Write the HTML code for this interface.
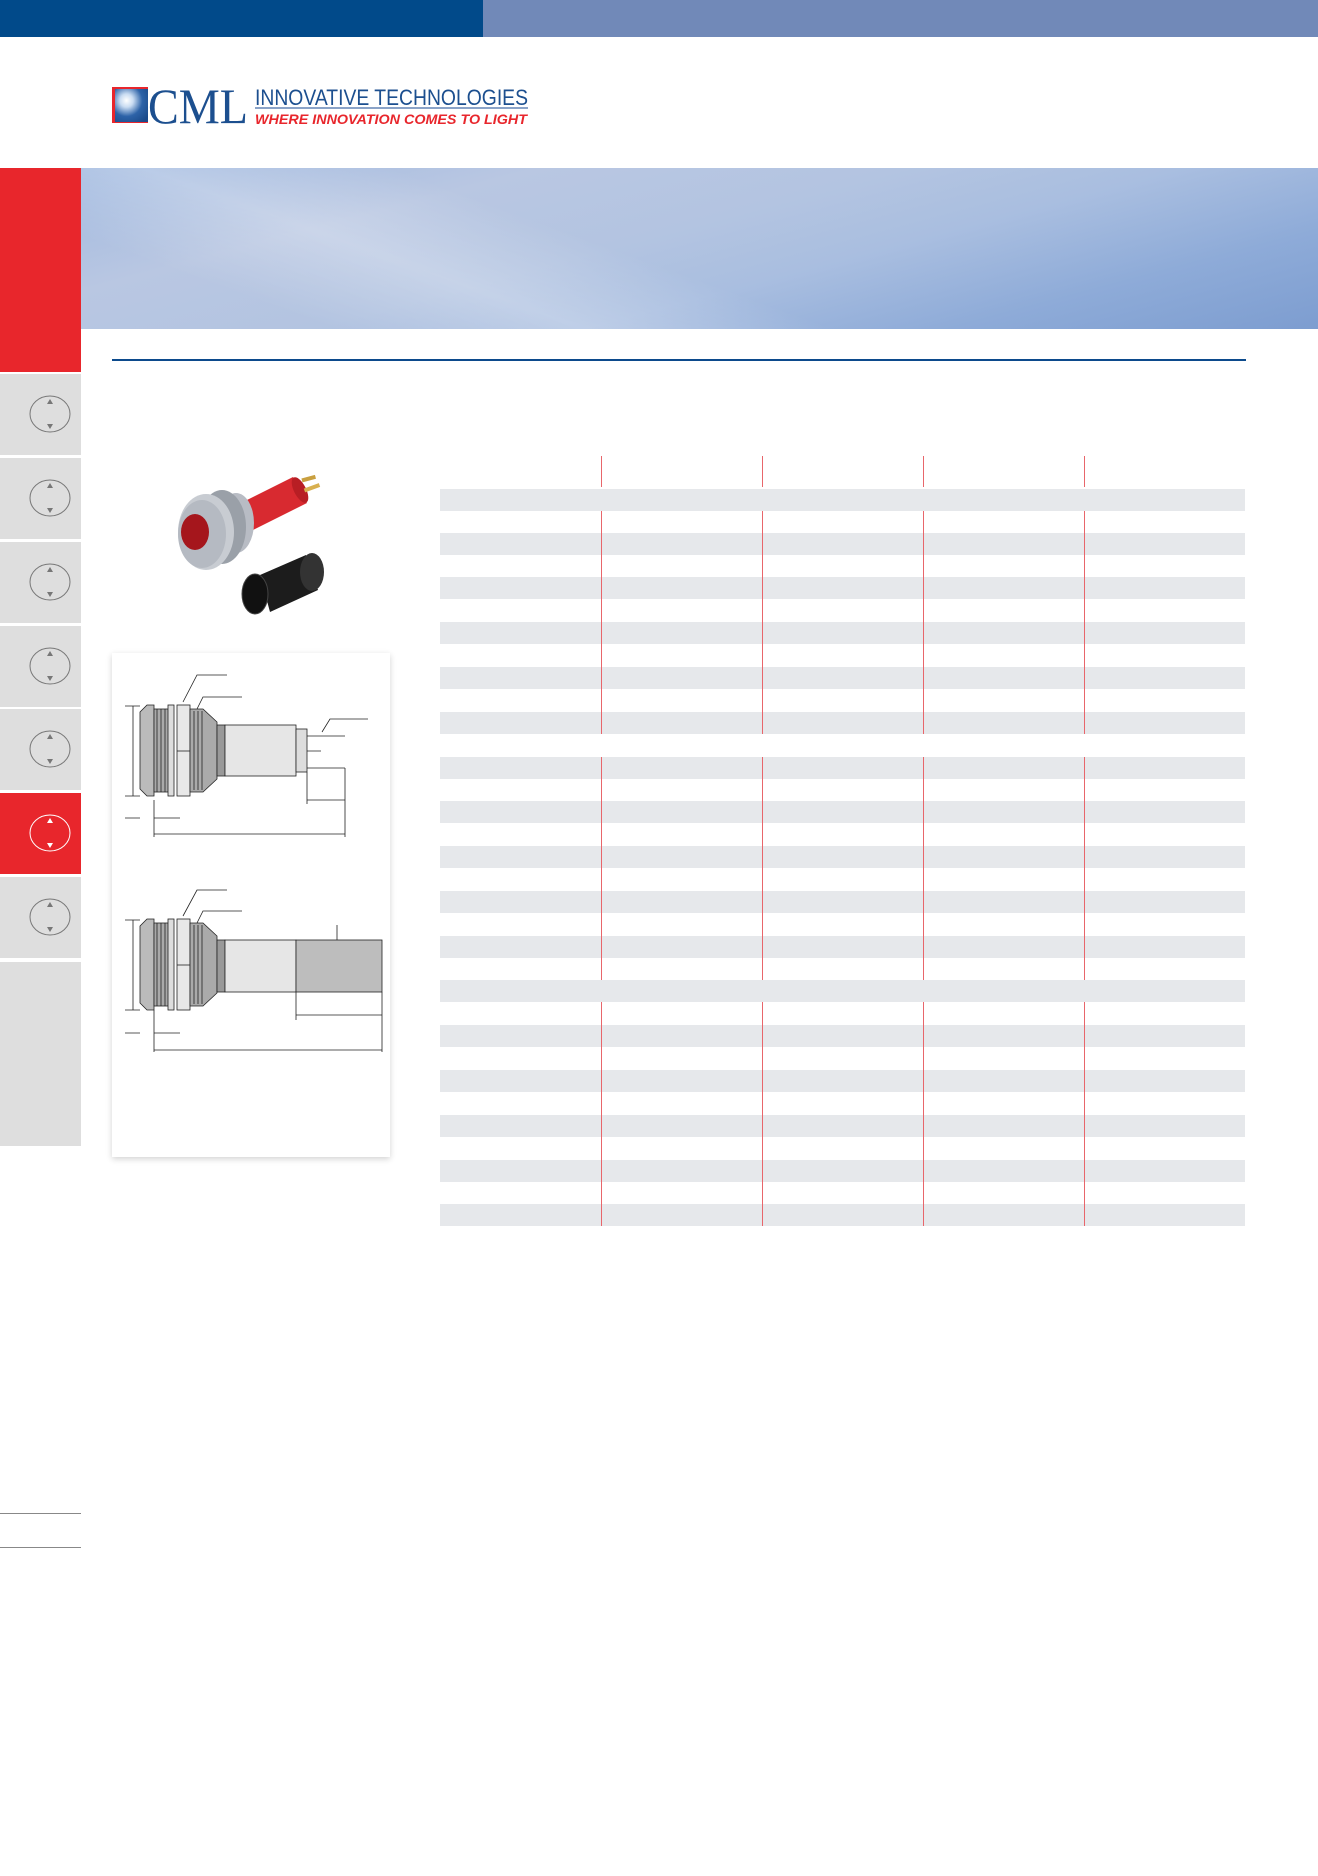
<!DOCTYPE html>
<html><head><meta charset="utf-8"><style>
*{margin:0;padding:0;box-sizing:border-box}
body{width:1318px;height:1876px;position:relative;background:#fff;overflow:hidden;font-family:"Liberation Sans",sans-serif}
.a{position:absolute}
.tab{position:absolute;left:0;width:81px;background:#dedede}
.stripe{position:absolute;left:440px;width:805px;height:22px;background:#e6e8eb}
.vl{position:absolute;width:1px;background:#e8666b}
</style></head><body>
<div class="a" style="left:0;top:0;width:483px;height:37px;background:#014a8a"></div>
<div class="a" style="left:483px;top:0;width:835px;height:37px;background:#7189b8"></div>

<svg class="a" style="left:108px;top:82px" width="430" height="46" viewBox="108 82 430 46">
<defs><radialGradient id="sun" cx="0.35" cy="0.35" r="0.8"><stop offset="0" stop-color="#fff"/><stop offset="0.25" stop-color="#c9dcf2"/><stop offset="0.6" stop-color="#2d63a8"/><stop offset="1" stop-color="#1a4a8a"/></radialGradient></defs>
<rect x="112" y="87" width="36" height="36" fill="#e8262c"/>
<rect x="115" y="89" width="33" height="33" fill="url(#sun)"/>
<text x="148" y="123" font-family="Liberation Serif,serif" font-size="50" fill="#1c4f8f" textLength="100" lengthAdjust="spacingAndGlyphs">CML</text>
<text x="255" y="105" font-family="Liberation Sans,sans-serif" font-size="22" fill="#1c4f8f" textLength="273" lengthAdjust="spacingAndGlyphs">INNOVATIVE TECHNOLOGIES</text>
<rect x="255" y="107" width="273" height="2" fill="#8aa3c8"/>
<text x="255" y="124" font-family="Liberation Sans,sans-serif" font-size="14" font-weight="bold" font-style="italic" fill="#e8262c" textLength="272" lengthAdjust="spacingAndGlyphs">WHERE INNOVATION COMES TO LIGHT</text>
</svg>

<div class="a" style="left:0;top:168px;width:81px;height:204px;background:#e8262c"></div>
<div class="a" style="left:81px;top:168px;width:1237px;height:161px;background:linear-gradient(165deg,#9fb8df 0%,#b9c7e2 25%,#b3c4e1 45%,#a9bee0 60%,#8eabd8 80%,#7d9dd0 100%)"></div>
<div class="a" style="left:81px;top:168px;width:1237px;height:161px;background:linear-gradient(200deg,rgba(255,255,255,0) 55%,rgba(255,255,255,0.25) 70%,rgba(255,255,255,0) 85%)"></div>
<div class="a" style="left:112px;top:359px;width:1134px;height:2px;background:#0c4a8c"></div>

<div class="tab" style="top:374px;height:81px"></div>
<div class="tab" style="top:458px;height:81px"></div>
<div class="tab" style="top:542px;height:81px"></div>
<div class="tab" style="top:626px;height:81px"></div>
<div class="tab" style="top:709px;height:81px"></div>
<div class="tab" style="top:793px;height:81px;background:#e8262c"></div>
<div class="tab" style="top:877px;height:81px"></div>
<div class="tab" style="top:962px;height:184px"></div>
<svg class="a" style="left:0;top:0" width="81" height="1000">
<g fill="none" stroke="#777" stroke-width="1">
<ellipse cx="50" cy="414" rx="20" ry="18"/><ellipse cx="50" cy="498" rx="20" ry="18"/><ellipse cx="50" cy="582" rx="20" ry="18"/><ellipse cx="50" cy="666" rx="20" ry="18"/><ellipse cx="50" cy="749" rx="20" ry="18"/><ellipse cx="50" cy="917" rx="20" ry="18"/>
<ellipse cx="50" cy="833" rx="20" ry="18" stroke="#fff"/></g>
<g fill="#777"><path d="M50 399l-3 5h6zM50 429l-3-5h6zM50 483l-3 5h6zM50 513l-3-5h6zM50 567l-3 5h6zM50 597l-3-5h6zM50 651l-3 5h6zM50 681l-3-5h6zM50 734l-3 5h6zM50 764l-3-5h6zM50 902l-3 5h6zM50 932l-3-5h6z"/><path fill="#fff" d="M50 818l-3 5h6zM50 848l-3-5h6z"/></g>
</svg>
<div class="a" style="left:0;top:1513px;width:81px;height:1px;background:#888"></div>
<div class="a" style="left:0;top:1547px;width:81px;height:1px;background:#888"></div>

<svg class="a" style="left:150px;top:450px" width="200" height="180" viewBox="150 450 200 180">
<polygon points="233,507 293,477 307,503 247,533" fill="#d82a30"/>
<ellipse cx="300" cy="490" rx="6" ry="14" fill="#b81e24" transform="rotate(-27 300 490)"/>
<rect x="302" y="479" width="14" height="4" fill="#c9a040" transform="rotate(-15 300 481)"/>
<rect x="304" y="490" width="16" height="4" fill="#d8b050" transform="rotate(-20 300 490)"/>
<ellipse cx="236" cy="523" rx="18" ry="30" fill="#b8bcc4"/>
<ellipse cx="222" cy="527" rx="24" ry="37" fill="#9aa0a8"/>
<ellipse cx="206" cy="532" rx="28" ry="38" fill="#c8ccd2"/>
<ellipse cx="202" cy="534" rx="24" ry="34" fill="#b5bac2"/>
<ellipse cx="195" cy="532" rx="14" ry="18" fill="#a5161c"/>
<polygon points="260,575 306,555 318,590 270,612" fill="#1c1c1c"/>
<ellipse cx="312" cy="572" rx="12" ry="19" fill="#333"/>
<ellipse cx="255" cy="594" rx="13" ry="20" fill="#111" stroke="#444"/>
</svg>

<div class="a" style="left:112px;top:653px;width:278px;height:504px;background:#fff;box-shadow:0 2px 6px rgba(0,0,0,0.18)"></div>
<svg class="a" style="left:112px;top:653px" width="278" height="504" viewBox="112 653 278 504">
<g stroke="#222" stroke-width="0.8">
<polygon points="140,712 147,705 154,705 154,796 147,796 140,789" fill="#bbb"/>
<rect x="154" y="709" width="19" height="83" fill="#aaa"/>
<rect x="168" y="705" width="6" height="91" fill="#ddd"/>
<rect x="177" y="705" width="13" height="91" fill="#e8e8e8"/>
<line x1="177" y1="751" x2="190" y2="751"/>
<polygon points="190,709 203,709 217,722 217,779 203,792 190,792" fill="#aaa"/>
<rect x="217" y="725" width="8" height="51" fill="#999"/>
<rect x="225" y="725" width="71" height="51" fill="#e6e6e6"/>
<rect x="296" y="729" width="11" height="43" fill="#ddd"/>
<g fill="none"><line x1="157" y1="709" x2="157" y2="792"/><line x1="161" y1="709" x2="161" y2="792"/><line x1="165" y1="709" x2="165" y2="792"/><line x1="194" y1="711" x2="194" y2="790"/><line x1="198" y1="711" x2="198" y2="790"/><line x1="202" y1="711" x2="202" y2="790"/>
<path d="M307 736H345M307 751H321M307 768H345"/>
<path d="M133 706V796M125 706H140M125 796H140M125 818H140M154 818H180M154 800V837M307 772V804M345 768V837M307 800H345M154 834H345"/>
<path d="M183 702L197 675H227M197 709L203 697H242M322 732L330 719H368"/></g>
</g>
<g stroke="#222" stroke-width="0.8" fill="none">
<polygon points="140,926 147,919 154,919 154,1010 147,1010 140,1003" fill="#bbb"/>
<rect x="154" y="923" width="19" height="83" fill="#aaa"/>
<rect x="168" y="919" width="6" height="91" fill="#ddd"/>
<rect x="177" y="919" width="13" height="91" fill="#e8e8e8"/>
<line x1="177" y1="965" x2="190" y2="965"/>
<polygon points="190,923 203,923 217,936 217,993 203,1006 190,1006" fill="#aaa"/>
<rect x="217" y="940" width="8" height="52" fill="#999"/>
<rect x="225" y="940" width="71" height="52" fill="#e6e6e6"/>
<rect x="296" y="940" width="86" height="52" fill="#bdbdbd"/>
<path d="M157 923V1006M161 923V1006M165 923V1006M194 925V1004M198 925V1004M202 925V1004"/>
<path d="M133 920V1010M125 920H140M125 1010H140M125 1033H140M154 1033H180M154 1010V1052M296 992V1020M382 992V1052M296 1015H382M154 1050H382M337 925V940"/>
<path d="M183 916L197 890H227M197 923L203 911H242"/>
</g>
</svg>

<div class="stripe" style="top:489px"></div>
<div class="stripe" style="top:533px"></div>
<div class="stripe" style="top:577px"></div>
<div class="stripe" style="top:622px"></div>
<div class="stripe" style="top:667px"></div>
<div class="stripe" style="top:712px"></div>
<div class="stripe" style="top:757px"></div>
<div class="stripe" style="top:801px"></div>
<div class="stripe" style="top:846px"></div>
<div class="stripe" style="top:891px"></div>
<div class="stripe" style="top:936px"></div>
<div class="stripe" style="top:980px"></div>
<div class="stripe" style="top:1025px"></div>
<div class="stripe" style="top:1070px"></div>
<div class="stripe" style="top:1115px"></div>
<div class="stripe" style="top:1160px"></div>
<div class="stripe" style="top:1204px"></div>

<div class="vl" style="left:601px;top:456px;height:31px"></div>
<div class="vl" style="left:762px;top:456px;height:31px"></div>
<div class="vl" style="left:923px;top:456px;height:31px"></div>
<div class="vl" style="left:1084px;top:456px;height:31px"></div>
<div class="vl" style="left:601px;top:511px;height:223px"></div>
<div class="vl" style="left:762px;top:511px;height:223px"></div>
<div class="vl" style="left:923px;top:511px;height:223px"></div>
<div class="vl" style="left:1084px;top:511px;height:223px"></div>
<div class="vl" style="left:601px;top:757px;height:223px"></div>
<div class="vl" style="left:762px;top:757px;height:223px"></div>
<div class="vl" style="left:923px;top:757px;height:223px"></div>
<div class="vl" style="left:1084px;top:757px;height:223px"></div>
<div class="vl" style="left:601px;top:1002px;height:224px"></div>
<div class="vl" style="left:762px;top:1002px;height:224px"></div>
<div class="vl" style="left:923px;top:1002px;height:224px"></div>
<div class="vl" style="left:1084px;top:1002px;height:224px"></div>
</body></html>
